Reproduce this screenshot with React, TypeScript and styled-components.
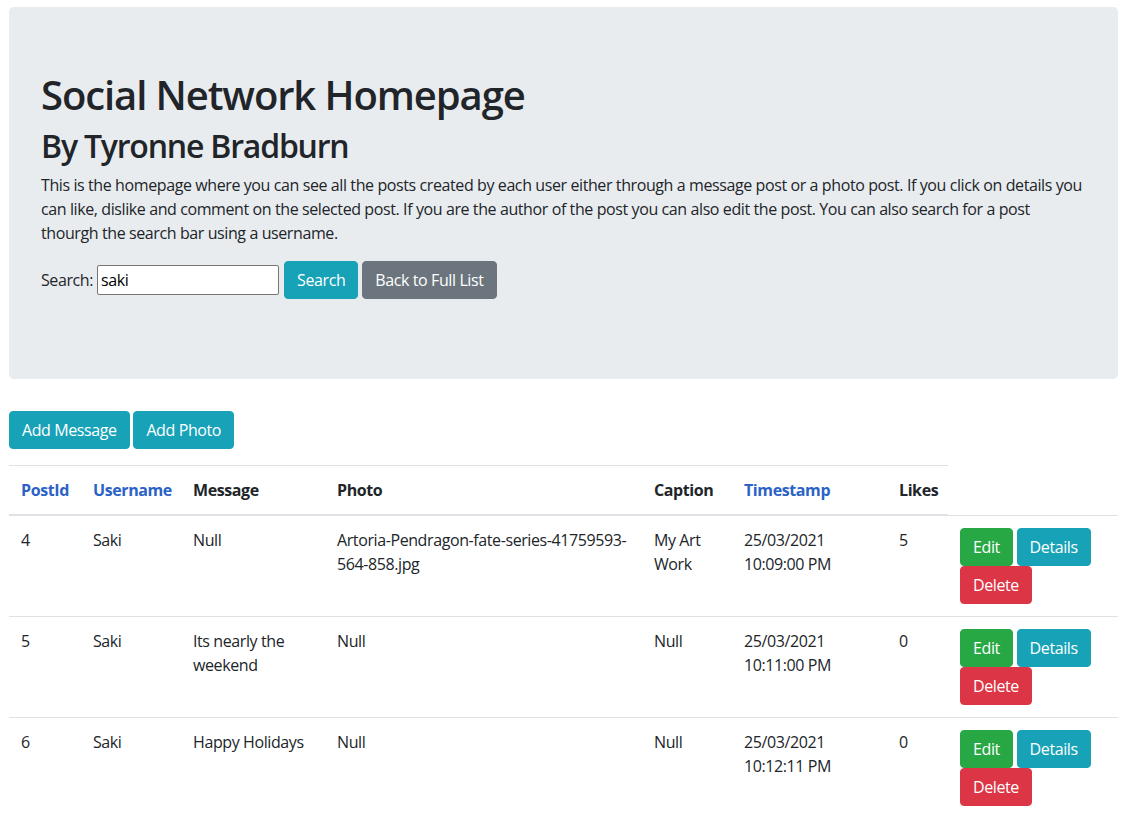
import React from 'react';
import styled, { createGlobalStyle } from 'styled-components';

const GlobalStyle = createGlobalStyle`
  body {
    margin: 0;
    font-family: "Open Sans", "Noto Sans", sans-serif;
    font-size: 16px;
    line-height: 1.5;
    letter-spacing: -0.4px;
    color: #212529;
    background: #fff;
  }
`;

type Post = {
  id: number;
  username: string;
  message: string;
  photo: string;
  caption: string;
  date: string;
  time: string;
  likes: number;
};

const posts: Post[] = [
  { id: 4, username: 'Saki', message: 'Null', photo: 'Artoria-Pendragon-fate-series-41759593-564-858.jpg', caption: 'My Art Work', date: '25/03/2021', time: '10:09:00 PM', likes: 5 },
  { id: 5, username: 'Saki', message: 'Its nearly the weekend', photo: 'Null', caption: 'Null', date: '25/03/2021', time: '10:11:00 PM', likes: 0 },
  { id: 6, username: 'Saki', message: 'Happy Holidays', photo: 'Null', caption: 'Null', date: '25/03/2021', time: '10:12:11 PM', likes: 0 },
];

// larguras das colunas tiradas da tela original
const colunas = [72, 100, 144, 317, 90, 155, 61, 170];

const App: React.FC = () => {
  return (
    <Page>
      <GlobalStyle />
      <Jumbotron>
        <Title>Social Network Homepage</Title>
        <Subtitle>By Tyronne Bradburn</Subtitle>
        <Lead>
          This is the homepage where you can see all the posts created by each user either through a message post or a
          photo post. If you click on details you can like, dislike and comment on the selected post. If you are the
          author of the post you can also edit the post. You can also search for a post thourgh the search bar using a
          username.
        </Lead>
        <SearchForm>
          <SearchLabel>Search:</SearchLabel>
          <SearchInput type="text" defaultValue="saki" />
          <Button $variant="info">Search</Button>
          <Button $variant="secondary">Back to Full List</Button>
        </SearchForm>
      </Jumbotron>

      <Actions>
        <Button $variant="info">Add Message</Button> <Button $variant="info">Add Photo</Button>
      </Actions>

      <Table>
        <colgroup>
          {colunas.map((w, i) => (
            <col key={i} style={{ width: w }} />
          ))}
        </colgroup>
        <thead>
          <tr>
            <Th $link>PostId</Th>
            <Th $link>Username</Th>
            <Th>Message</Th>
            <Th>Photo</Th>
            <Th>Caption</Th>
            <Th $link>Timestamp</Th>
            <Th>Likes</Th>
          </tr>
        </thead>
        <tbody>
          {posts.map((p) => (
            <tr key={p.id}>
              <Td>{p.id}</Td>
              <Td>{p.username}</Td>
              <Td>{p.message}</Td>
              <Td>{p.photo}</Td>
              <Td>{p.caption}</Td>
              <Td>
                {p.date}
                <br />
                {p.time}
              </Td>
              <Td>{p.likes}</Td>
              <Td>
                <Button $variant="success">Edit</Button> <Button $variant="info">Details</Button>{' '}
                <Button $variant="danger">Delete</Button>
              </Td>
            </tr>
          ))}
        </tbody>
      </Table>
    </Page>
  );
};

export default App;

const Page = styled.div`
  padding: 7px 8px 0 9px;
`;

const Jumbotron = styled.div`
  background-color: #e9ecef;
  border-radius: 4.8px;
  padding: 64px 32px;
  margin-bottom: 32px;
`;

const Title = styled.h1`
  margin: 0 0 8px;
  font-size: 40px;
  font-weight: 600;
  letter-spacing: -1.1px;
  line-height: 1.2;
`;

const Subtitle = styled.h2`
  margin: 0 0 8px;
  font-size: 32px;
  font-weight: 600;
  letter-spacing: -1.2px;
  line-height: 1.2;
`;

const Lead = styled.p`
  margin: 0 0 16px;
`;

const SearchForm = styled.div`
  display: flex;
  align-items: baseline;
  gap: 4px;
  margin-bottom: 16px;
  height: 38px;
`;

const SearchLabel = styled.span`
  margin-right: 0;
`;

const SearchInput = styled.input`
  width: 174px;
  height: 26px;
  font-family: inherit;
  font-size: 16px;
  letter-spacing: -0.4px;
  padding: 1px 3px;
  border: 1px solid #767676;
  border-radius: 2px;
  margin-right: 1px;
  margin-top: 2px;
`;

const cores: Record<string, string> = {
  info: '#17a2b8',
  secondary: '#6c757d',
  success: '#28a745',
  danger: '#dc3545',
};

const Button = styled.button<{ $variant: string }>`
  display: inline-block;
  font-family: inherit;
  font-size: 16px;
  letter-spacing: -0.4px;
  line-height: 1.5;
  padding: 6px 12px;
  border: 1px solid ${(p) => cores[p.$variant]};
  border-radius: 4px;
  background-color: ${(p) => cores[p.$variant]};
  color: #fff;
  cursor: pointer;
  vertical-align: middle;
`;

const Actions = styled.div`
  margin-bottom: 16px;
`;

const Table = styled.table`
  width: 100%;
  table-layout: fixed;
  border-collapse: collapse;
`;

const Th = styled.th<{ $link?: boolean }>`
  text-align: left;
  padding: 12px;
  border-top: 1px solid #dee2e6;
  border-bottom: 2px solid #dee2e6;
  color: ${(p) => (p.$link ? '#2b62c6' : '#212529')};
  font-weight: 700;
  vertical-align: bottom;
`;

const Td = styled.td`
  padding: 12px;
  border-top: 1px solid #dee2e6;
  vertical-align: top;
  word-wrap: break-word;
`;
